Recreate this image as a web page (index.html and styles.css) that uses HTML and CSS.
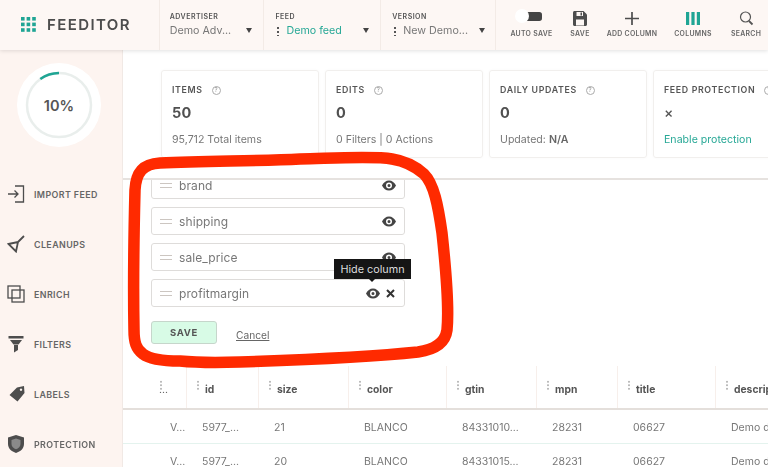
FILE: index.html
```html
<!DOCTYPE html>
<html lang="en">
<head>
<meta charset="utf-8">
<title>Feeditor</title>
<link rel="stylesheet" href="styles.css">
</head>
<body>
<div class="app">
  <header class="topbar">
    <div class="brand">
      <svg class="brand-icon" width="15" height="15" viewBox="0 0 15 15" fill="#1fa594"><rect x="0" y="0" width="3.6" height="3.6"/><rect x="5.6" y="0" width="3.6" height="3.6"/><rect x="11.2" y="0" width="3.6" height="3.6"/><rect x="0" y="5.6" width="3.6" height="3.6"/><rect x="5.6" y="5.6" width="3.6" height="3.6"/><rect x="11.2" y="5.6" width="3.6" height="3.6"/><rect x="0" y="11.2" width="3.6" height="3.6"/><rect x="5.6" y="11.2" width="3.6" height="3.6"/><rect x="11.2" y="11.2" width="3.6" height="3.6"/></svg>
      <span class="brand-name">FEEDITOR</span>
    </div>
    <div class="picker picker-adv">
      <div class="picker-label">ADVERTISER</div>
      <div class="picker-value"><span>Demo Adv...</span><i class="caret"></i></div>
    </div>
    <div class="picker picker-feed">
      <div class="picker-label">FEED</div>
      <div class="picker-value"><b class="dots"></b><span class="teal">Demo feed</span><i class="caret"></i></div>
    </div>
    <div class="picker picker-ver">
      <div class="picker-label">VERSION</div>
      <div class="picker-value"><b class="dots"></b><span>New Demo...</span><i class="caret"></i></div>
    </div>
    <div class="tools">
      <div class="tool tool-auto">
        <div class="toggle"><span class="knob"></span></div>
        <span class="tool-label">AUTO SAVE</span>
      </div>
      <div class="tool tool-save">
        <svg width="14" height="15" viewBox="0 0 14 15"><path fill="#4d4d4d" d="M0 1.5C0 .7.7 0 1.5 0h9L14 3.5v10c0 .8-.7 1.5-1.500 1.500h-11C.7 15 0 14.300 0 13.500z"/><rect x="3.500" y="1" width="6.500" height="4" fill="#fdf7f4"/><rect x="7.500" y="1.500" width="1.500" height="3" fill="#4d4d4d"/><rect x="3" y="8.500" width="8" height="6" fill="#fdf7f4"/></svg>
        <span class="tool-label">SAVE</span>
      </div>
      <div class="tool tool-add">
        <svg width="14" height="15" viewBox="0 0 14 15"><path stroke="#4d4d4d" stroke-width="1.700" d="M7 1v13M0 7.500h14"/></svg>
        <span class="tool-label">ADD COLUMN</span>
      </div>
      <div class="tool tool-cols">
        <svg width="14" height="15" viewBox="0 0 14 15" fill="#1fa594"><rect x="0" y="1" width="3.200" height="13"/><rect x="5.400" y="1" width="3.200" height="13"/><rect x="10.800" y="1" width="3.200" height="13"/></svg>
        <span class="tool-label">COLUMNS</span>
      </div>
      <div class="tool tool-search">
        <svg width="15" height="15" viewBox="0 0 15 15" fill="none" stroke="#555"><circle cx="6.500" cy="6" r="5" stroke-width="1.200"/><path stroke-width="1.800" d="M10 10l3.500 3.500"/></svg>
        <span class="tool-label">SEARCH</span>
      </div>
    </div>
  </header>

  <div class="body">
    <aside class="sidebar">
      <div class="ring">
        <svg width="84" height="84" viewBox="0 0 84 84" fill="none"><circle cx="42" cy="42" r="32" stroke="#e9eeec" stroke-width="2.500"/><path d="M23.300 16.100A32 32 0 0 1 42 10" stroke="#1fa594" stroke-width="2.500"/></svg>
        <span class="ring-text">10%</span>
      </div>
      <nav class="nav">
        <div class="nav-item">
          <svg width="18" height="18" viewBox="0 0 18 18" fill="none" stroke="#4d4d4d" stroke-width="1.300"><path d="M8 1h8.500v16H8M1 9h10M7.500 5.500L11 9l-3.500 3.500"/></svg>
          <span>IMPORT FEED</span>
        </div>
        <div class="nav-item">
          <svg width="18" height="18" viewBox="0 0 18 18" fill="none" stroke="#4d4d4d" stroke-width="1.800"><path d="M1.500 9L11 7l-2 9.500zM10.500 7.500L17 1"/></svg>
          <span>CLEANUPS</span>
        </div>
        <div class="nav-item">
          <svg width="18" height="18" viewBox="0 0 18 18" fill="none" stroke="#4d4d4d" stroke-width="1.300"><rect x="1" y="1" width="12" height="12"/><rect x="5" y="5" width="12" height="12"/></svg>
          <span>ENRICH</span>
        </div>
        <div class="nav-item">
          <svg width="18" height="18" viewBox="0 0 18 18" fill="#4d4d4d"><rect x="1.500" y="1" width="15" height="2.500"/><path d="M3 5h12l-3.500 4.500h-5z"/><path d="M7 10h4v5l-4 2.500z"/></svg>
          <span>FILTERS</span>
        </div>
        <div class="nav-item">
          <svg width="18" height="18" viewBox="0 0 18 18" fill="#4d4d4d"><path d="M10 2.500L17 1l.500 7-7 8.500-8-6.500zM14 3.500a1.200 1.200 0 1 0 .01 0z" fill-rule="evenodd"/></svg>
          <span>LABELS</span>
        </div>
        <div class="nav-item">
          <svg width="18" height="18" viewBox="0 0 18 18"><path fill="#4d4d4d" d="M9 0l8 2.500V9c0 4.500-3.500 7.500-8 9-4.500-1.500-8-4.500-8-9V2.500z"/><path fill="#8a8a8a" d="M9 3.500l4.500 1.500v4c0 2.500-2 4.300-4.500 5.300-2.500-1-4.500-2.800-4.500-5.300V5z"/></svg>
          <span>PROTECTION</span>
        </div>
      </nav>
    </aside>

    <main class="main">
      <section class="cards">
        <div class="card">
          <div class="card-title">ITEMS <i class="help">?</i></div>
          <div class="card-num">50</div>
          <div class="card-sub">95,712 Total items</div>
        </div>
        <div class="card">
          <div class="card-title">EDITS <i class="help">?</i></div>
          <div class="card-num">0</div>
          <div class="card-sub">0 Filters | 0 Actions</div>
        </div>
        <div class="card">
          <div class="card-title">DAILY UPDATES <i class="help">?</i></div>
          <div class="card-num">0</div>
          <div class="card-sub">Updated: <b>N/A</b></div>
        </div>
        <div class="card">
          <div class="card-title">FEED PROTECTION <i class="help">?</i></div>
          <div class="card-x">×</div>
          <div class="card-sub teal">Enable protection</div>
        </div>
      </section>

      <section class="panel">
        <div class="field">
          <i class="grip"></i><span class="field-name">brand</span>
          <svg class="eye" width="14" height="11" viewBox="0 0 14 10"><path fill="#444" fill-rule="evenodd" d="M7 0c3 0 5.600 2 7 5-1.400 3-4 5-7 5S1.400 8 0 5c1.400-3 4-5 7-5zm0 2a3 3 0 1 0 0 6 3 3 0 0 0 0-6zm0 1.500a1.500 1.500 0 1 1 0 3 1.500 1.500 0 0 1 0-3z"/></svg>
        </div>
        <div class="field">
          <i class="grip"></i><span class="field-name">shipping</span>
          <svg class="eye" width="14" height="11" viewBox="0 0 14 10"><path fill="#444" fill-rule="evenodd" d="M7 0c3 0 5.600 2 7 5-1.400 3-4 5-7 5S1.400 8 0 5c1.400-3 4-5 7-5zm0 2a3 3 0 1 0 0 6 3 3 0 0 0 0-6zm0 1.500a1.500 1.500 0 1 1 0 3 1.500 1.500 0 0 1 0-3z"/></svg>
        </div>
        <div class="field">
          <i class="grip"></i><span class="field-name">sale_price</span>
          <svg class="eye" width="14" height="11" viewBox="0 0 14 10"><path fill="#444" fill-rule="evenodd" d="M7 0c3 0 5.600 2 7 5-1.400 3-4 5-7 5S1.400 8 0 5c1.400-3 4-5 7-5zm0 2a3 3 0 1 0 0 6 3 3 0 0 0 0-6zm0 1.500a1.500 1.500 0 1 1 0 3 1.500 1.500 0 0 1 0-3z"/></svg>
        </div>
        <div class="field field-active">
          <i class="grip"></i><span class="field-name">profitmargin</span>
          <span class="tooltip">Hide column</span>
          <svg class="eye" width="14" height="11" viewBox="0 0 14 10"><path fill="#444" fill-rule="evenodd" d="M7 0c3 0 5.600 2 7 5-1.400 3-4 5-7 5S1.400 8 0 5c1.400-3 4-5 7-5zm0 2a3 3 0 1 0 0 6 3 3 0 0 0 0-6zm0 1.500a1.500 1.500 0 1 1 0 3 1.500 1.500 0 0 1 0-3z"/></svg>
          <svg class="close" width="9" height="9" viewBox="0 0 9 9"><path stroke="#333" stroke-width="2" d="M1 1l7 7M8 1L1 8"/></svg>
        </div>
        <div class="actions">
          <button class="save-btn">SAVE</button>
          <a class="cancel">Cancel</a>
        </div>
      </section>

      <section class="table">
        <div class="row head">
          <div class="th"><i class="vdots"></i><span class="th-first">...</span></div>
          <div class="th"><i class="vdots"></i>id</div>
          <div class="th"><i class="vdots"></i>size</div>
          <div class="th"><i class="vdots"></i>color</div>
          <div class="th"><i class="vdots"></i>gtin</div>
          <div class="th"><i class="vdots"></i>mpn</div>
          <div class="th"><i class="vdots"></i>title</div>
          <div class="th"><i class="vdots"></i>descrip</div>
        </div>
        <div class="row">
          <div class="td td-first">V...</div><div class="td">5977_...</div><div class="td">21</div><div class="td">BLANCO</div><div class="td">84331010...</div><div class="td">28231</div><div class="td">06627</div><div class="td">Demo de</div>
        </div>
        <div class="row">
          <div class="td td-first">V...</div><div class="td">5977_...</div><div class="td">20</div><div class="td">BLANCO</div><div class="td">84331015...</div><div class="td">28231</div><div class="td">06627</div><div class="td">Demo de</div>
        </div>
      </section>
    </main>
  </div>

  <svg class="scribble" width="768" height="467" viewBox="0 0 768 467" fill="none"><path d="M160 163C210 161 260 161 300 159C340 158 375 156 392 159C405 161 415 166 424 174C434 184 438 205 442 233C446 270 449 310 447 330C445 345 432 350 418 352C370 357 300 360 240 362C210 363 190 362 180 361C160 361 148 358 143 354C136 349 134 342 134 330C133 280 134 230 135 190C136 172 143 164 160 163Z" stroke="#ff2a00" stroke-width="11.500" stroke-linejoin="round"/></svg>
</div>
</body>
</html>
```

FILE: styles.css
```css
* { box-sizing: border-box; }
html, body { margin: 0; height: 100%; }
body { font-family: "Inter", "Liberation Sans", sans-serif; color: #5c5c5c; background: #fff; overflow: hidden; }
.app { position: relative; width: 768px; height: 467px; overflow: hidden; display: flex; flex-direction: column; filter: blur(.3px); }
.teal { color: #27a896; }

.topbar { height: 50px; flex: none; display: flex; background: #fdf7f4; box-shadow: 0 1px 4px rgba(0,0,0,.12); position: relative; z-index: 2; }
.brand { width: 159px; display: flex; align-items: center; padding: 0 0 2px 21px; gap: 11px; }
.brand-name { font-size: 15px; font-weight: 600; letter-spacing: 1.400px; color: #4d4d4d; }
.picker { border-left: 1px solid #f3ebe6; padding: 12px 0 0 10px; }
.picker-adv { width: 105px; }
.picker-feed { width: 117px; padding-left: 11px; }
.picker-ver { width: 116px; padding-left: 11px; border-right: 1px solid #f3ebe6; }
.picker-label { font-size: 7px; font-weight: 600; letter-spacing: .5px; color: #555; line-height: 9px; }
.picker-value { display: flex; align-items: center; margin-top: 3px; font-size: 10.700px; line-height: 14px; color: #777; position: relative; height: 14px; }
.caret { position: absolute; right: 11px; top: 4px; border-left: 3.500px solid transparent; border-right: 3.500px solid transparent; border-top: 5px solid #444; }
.picker-ver .caret { right: 10px; }
.dots { width: 2px; height: 10px; margin-left: 2px; margin-right: 7px; background: radial-gradient(circle, #555 1px, transparent 1.200px) 0 0 / 2px 4px; }
.tools { flex: 1; display: flex; }
.tool { display: flex; flex-direction: column; align-items: center; padding-top: 11px; height: 50px; }
.tool svg { display: block; height: 15px; margin-bottom: 3px; }
.tool-label { font-size: 6.900px; font-weight: 600; letter-spacing: .3px; color: #666; line-height: 9px; white-space: nowrap; }
.tool-auto { width: 62px; padding-left: 5px; margin-left: 2px; }
.tool-save { width: 34px; margin-left: 3px; }
.tool-add { width: 66px; margin-left: 2px; }
.tool-cols { width: 52px; margin-left: 2px; }
.tool-search { width: 44px; margin-left: 5px; }
.toggle { width: 26px; height: 9px; background: #444; border-radius: 5px 3px 3px 5px; margin: 1px 5px 8px 0; position: relative; }
.knob { position: absolute; left: -1px; top: -3px; width: 14px; height: 14px; background: #fff; border-radius: 50%; }

.body { flex: 1; display: flex; min-height: 0; }
.sidebar { width: 123px; flex: none; background: #fdf4f0; border-right: 1px solid #f1e9e5; padding: 13px 0 0 17px; }
.ring { position: relative; width: 84px; height: 84px; background: #fff; border-radius: 50%; display: flex; align-items: center; justify-content: center; }
.ring svg { position: absolute; left: 0; top: 0; }
.ring-text { font-size: 14.500px; font-weight: 600; color: #555; }
.nav { margin: 38px 0 0 -10px; display: flex; flex-direction: column; gap: 32px; }
.nav-item { display: flex; align-items: center; gap: 9px; height: 18px; font-size: 8.900px; font-weight: 600; letter-spacing: .4px; color: #666; white-space: nowrap; }
.nav-item svg { flex: none; }

.main { flex: 1; min-width: 0; display: flex; flex-direction: column; }
.cards { height: 130px; flex: none; display: flex; gap: 6px; padding: 20px 0 0 38px; border-bottom: 2px solid #e6e2df; overflow: hidden; }
.card { width: 158px; height: 88px; flex: none; border: 1px solid #f1efed; border-radius: 3px; padding: 13px 0 0 10px; box-shadow: 0 0 3px rgba(0,0,0,.03); }
.card-title { font-size: 8.800px; font-weight: 600; letter-spacing: .65px; color: #555; line-height: 12px; white-space: nowrap; }
.help { display: inline-flex; width: 9px; height: 9px; margin-left: 6px; border: 1px solid #aaa; border-radius: 50%; font-size: 6px; font-style: normal; font-weight: 400; letter-spacing: 0; color: #999; align-items: center; justify-content: center; vertical-align: 1px; }
.card-num { font-size: 14.500px; font-weight: 700; color: #505050; line-height: 18px; margin-top: 8px; letter-spacing: .3px; }
.card-x { font-size: 14px; font-weight: 500; color: #555; line-height: 18px; margin-top: 8px; }
.card-sub { font-size: 10.600px; line-height: 14px; margin-top: 11px; color: #777; white-space: nowrap; }
.card-sub b { font-weight: 600; color: #666; }
.card-sub.teal { color: #27a896; }

.panel { height: 186px; flex: none; display: flex; flex-direction: column; justify-content: flex-end; gap: 8px; padding: 0 0 22px 28px; overflow: hidden; }
.field { flex: none; position: relative; width: 254px; height: 28px; border: 1px solid #dedcda; border-radius: 3px; display: flex; align-items: center; padding: 0 8px; }
.grip { width: 12px; height: 5px; border-top: 1px solid #ccc6c1; border-bottom: 1px solid #ccc6c1; margin-right: 7px; flex: none; }
.field-name { font-size: 12px; color: #777; flex: 1; letter-spacing: .1px; }
.close { margin-left: 6px; }
.field-active { padding-right: 9px; }
.tooltip { position: absolute; left: 182px; top: -21px; width: 77px; height: 20px; background: #151515; color: #ddd; font-size: 10.800px; display: flex; align-items: center; justify-content: center; z-index: 1; }
.tooltip::after { content: ""; position: absolute; left: 35px; bottom: -3px; border-left: 3px solid transparent; border-right: 3px solid transparent; border-top: 3px solid #151515; }
.actions { display: flex; align-items: center; gap: 19px; margin-top: 6px; }
.save-btn { width: 66px; height: 23px; padding: 0; background: #d8fbe6; border: 1px solid #c6d6cb; border-radius: 3px; font: 700 9.500px "Inter", "Liberation Sans", sans-serif; letter-spacing: .7px; color: #555; }
.cancel { font-size: 10.200px; color: #666; text-decoration: underline; margin-top: 4px; }

.table { flex: 1; min-height: 0; overflow: hidden; }
.row { display: grid; grid-template-columns: 64px 72px 90px 98px 90px 81px 98px 100px; height: 34px; border-bottom: 1px solid #e4f3ee; white-space: nowrap; }
.row.head { height: 44px; border-bottom: 2px solid #e4dfdb; }
.th { position: relative; display: flex; align-items: center; padding: 3px 0 0 18px; font-size: 10.300px; font-weight: 700; color: #555; border-right: 1px solid #f7efeb; overflow: hidden; }
.th-first { margin-left: 18px; font-weight: 400; }
.vdots { position: absolute; left: 10px; top: 14px; width: 2px; height: 10px; background: radial-gradient(circle, #bbb 1px, transparent 1.200px) 0 0 / 2px 3.500px; }
.th:first-child .vdots { left: 37px; }
.td { display: flex; align-items: center; padding: 1px 0 0 15px; font-size: 10.500px; color: #777; overflow: hidden; }
.td-first { padding-left: 47px; }
.scribble { position: absolute; left: 0; top: 0; z-index: 3; pointer-events: none; }
```
